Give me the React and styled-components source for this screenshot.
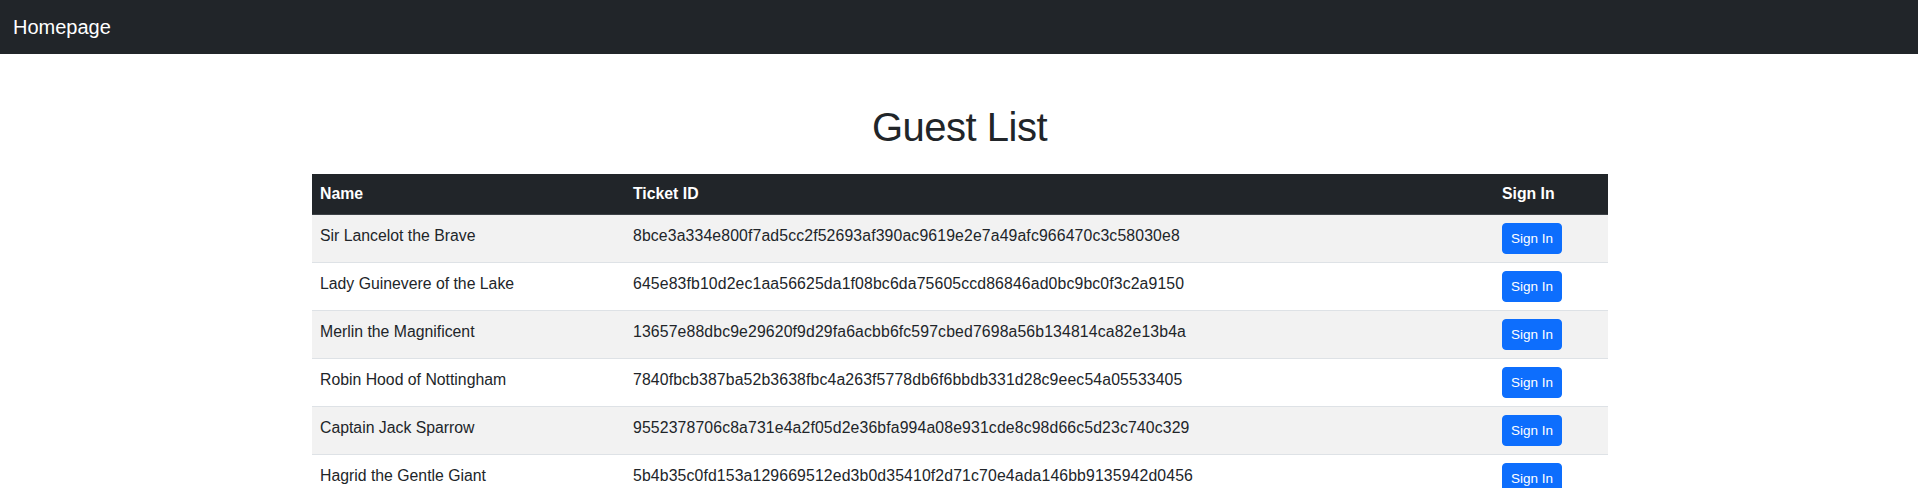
import React from "react";
import styled, { createGlobalStyle } from "styled-components";

const GlobalStyle = createGlobalStyle`
  html, body {
    margin: 0;
    padding: 0;
    overflow: hidden;
    background: #ffffff;
  }
  body {
    font-family: "Liberation Sans", Arial, sans-serif;
    color: #212529;
    font-size: 16px;
    line-height: 1.5;
  }
  * { box-sizing: border-box; }
`;

const NavBar = styled.nav`
  height: 54px;
  background: #212529;
  display: flex;
  align-items: center;
  padding: 0 13px;
`;

const Brand = styled.a`
  color: #ffffff;
  font-size: 20px;
  line-height: 30px;
  text-decoration: none;
`;

const Container = styled.main`
  max-width: 1320px;
  margin: 0 auto;
  padding: 49px 12px 0 13px;
`;

const Title = styled.h1`
  margin: 0 0 23px;
  text-align: center;
  font-size: 40px;
  line-height: 48px;
  font-weight: 400;
  letter-spacing: -0.5px;
  color: #212529;
`;

const Table = styled.table`
  width: 1296px;
  border-collapse: collapse;
  table-layout: fixed;
  font-size: 15.8px;
`;

const HeadCell = styled.th`
  width: ${(p) => p.$w}px;
  background: #212529;
  color: #ffffff;
  font-weight: 700;
  text-align: left;
  padding: 8px;
  line-height: 24px;
  border-bottom: 1px solid #3d4247;
  vertical-align: middle;
`;

const Row = styled.tr`
  background: ${(p) => (p.$striped ? "#f2f2f2" : "#ffffff")};
`;

const Cell = styled.td`
  padding: ${(p) => (p.$action ? "8px" : "8px 8px 14px")};
  line-height: 24px;
  border-bottom: 1px solid #dee2e6;
  vertical-align: middle;
  white-space: nowrap;
  color: #212529;
  letter-spacing: ${(p) => (p.$code ? "0.13px" : "normal")};
`;

const Button = styled.button`
  font-family: "Liberation Sans", Arial, sans-serif;
  font-size: 13.5px;
  line-height: 21px;
  padding: 4px 8px;
  border: 1px solid #0d6efd;
  border-radius: 4px;
  background: #0d6efd;
  color: #ffffff;
  cursor: pointer;
  display: block;
`;

const guests = [
  ["Sir Lancelot the Brave", "8bce3a334e800f7ad5cc2f52693af390ac9619e2e7a49afc966470c3c58030e8"],
  ["Lady Guinevere of the Lake", "645e83fb10d2ec1aa56625da1f08bc6da75605ccd86846ad0bc9bc0f3c2a9150"],
  ["Merlin the Magnificent", "13657e88dbc9e29620f9d29fa6acbb6fc597cbed7698a56b134814ca82e13b4a"],
  ["Robin Hood of Nottingham", "7840fbcb387ba52b3638fbc4a263f5778db6f6bbdb331d28c9eec54a05533405"],
  ["Captain Jack Sparrow", "9552378706c8a731e4a2f05d2e36bfa994a08e931cde8c98d66c5d23c740c329"],
  ["Hagrid the Gentle Giant", "5b4b35c0fd153a129669512ed3b0d35410f2d71c70e4ada146bb9135942d0456"],
];

export default function App() {
  return (
    <>
      <GlobalStyle />
      <NavBar>
        <Brand href="#">Homepage</Brand>
      </NavBar>
      <Container>
        <Title>Guest List</Title>
        <Table>
          <thead>
            <tr>
              <HeadCell $w={313}>Name</HeadCell>
              <HeadCell $w={869}>Ticket ID</HeadCell>
              <HeadCell $w={114}>Sign In</HeadCell>
            </tr>
          </thead>
          <tbody>
            {guests.map(([name, id], i) => (
              <Row key={id} $striped={i % 2 === 0}>
                <Cell>{name}</Cell>
                <Cell $code>{id}</Cell>
                <Cell $action>
                  <Button type="button">Sign In</Button>
                </Cell>
              </Row>
            ))}
          </tbody>
        </Table>
      </Container>
    </>
  );
}
